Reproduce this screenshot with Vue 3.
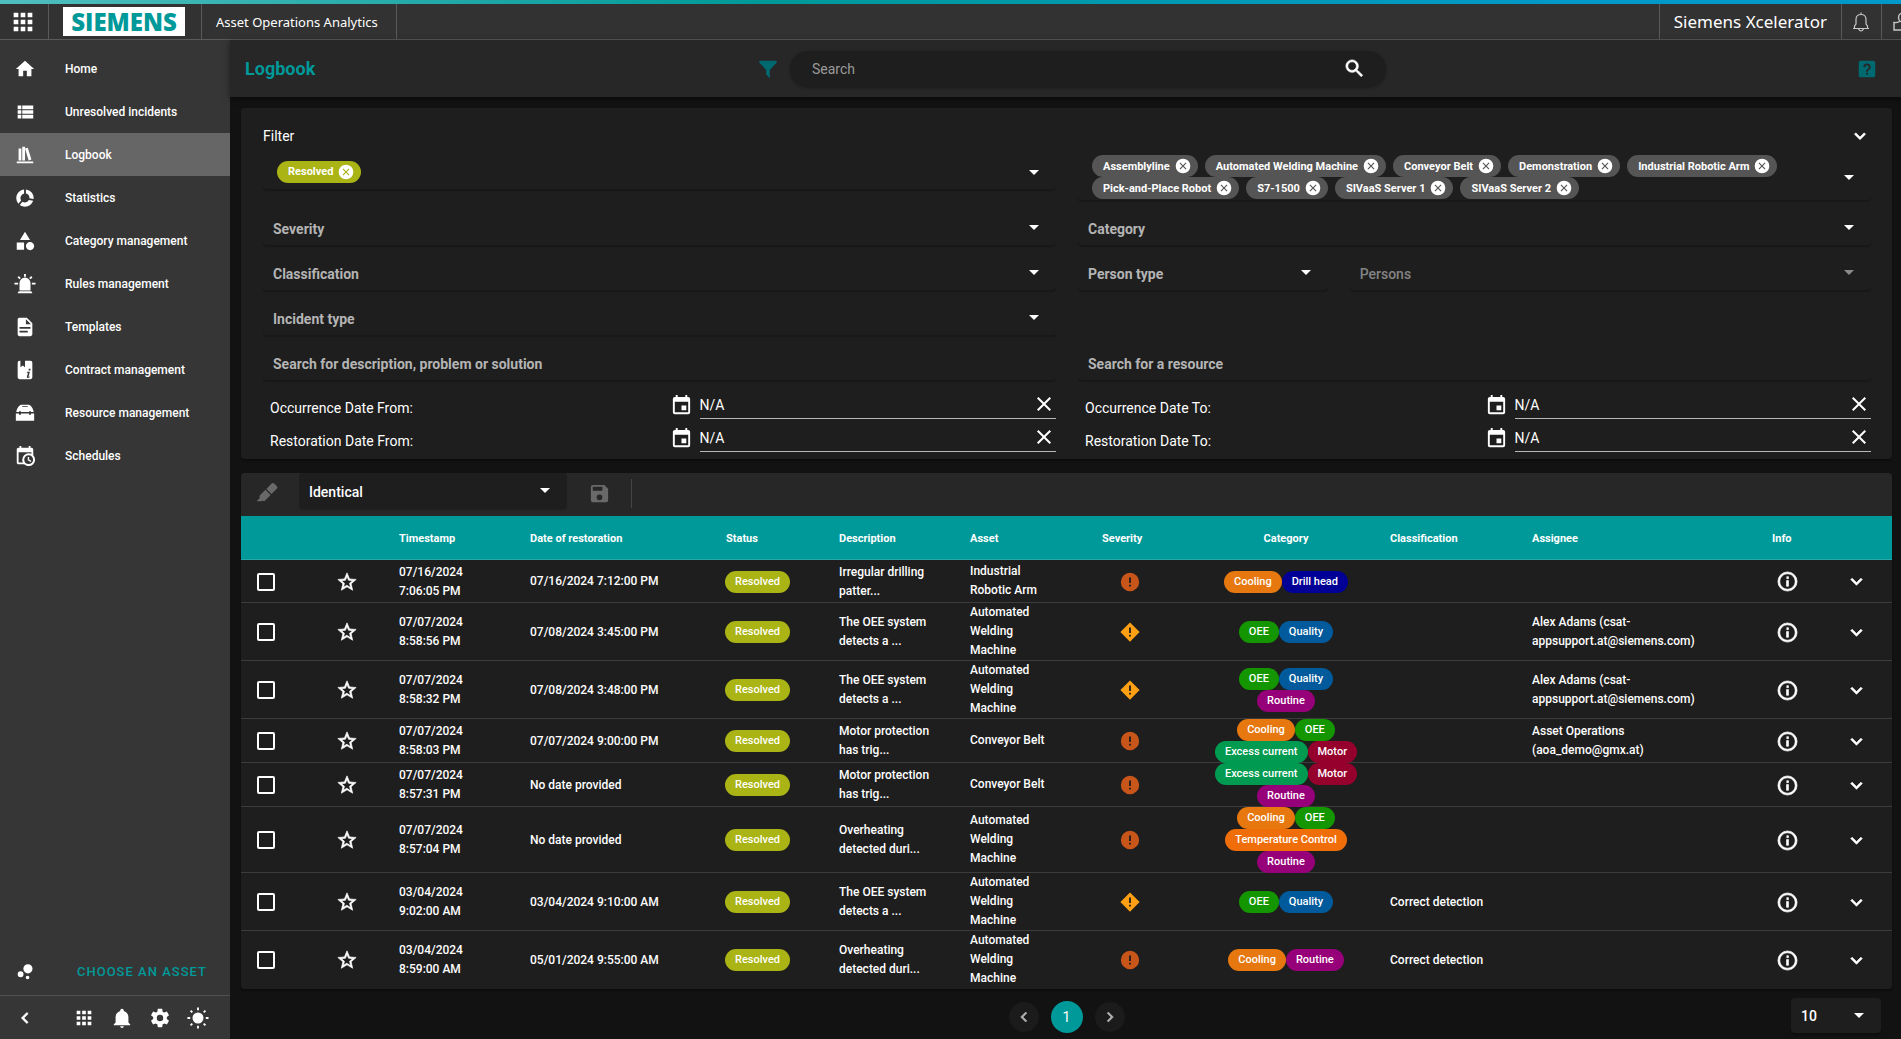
<script setup>
import { h } from 'vue'

const paths = {
  home: 'M10,20V14H14V20H19V12H22L12,3L2,12H5V20H10Z',
  list: 'M9,5V9H21V5M9,19H21V15H9M9,14H21V10H9M4,9H8V5H4M4,19H8V15H4M4,14H8V10H4V14Z',
  books: 'M9 3V18H12V3H9M12 5L16 18L19 17L15 4L12 5M5 5V18H8V5H5M3 19V21H21V19H3Z',
  donut: 'M13 2.6A9.5 9.5 0 0 1 21.4 13L16.8 12.4A4.9 4.9 0 0 0 13 7.2ZM20.9 15A9.5 9.5 0 0 1 6.3 19.6L9.2 16A4.9 4.9 0 0 0 16.2 14.3ZM4.8 18.2A9.5 9.5 0 0 1 11 2.6V7.2A4.9 4.9 0 0 0 7.8 14.6Z',
  shapes: 'M11,13.5V21.5H3V13.5H11M12,2L17.5,11H6.5L12,2M17.5,13C20,13 22,15 22,17.5C22,20 20,22 17.5,22C15,22 13,20 13,17.5C13,15 15,13 17.5,13Z',
  alarm: 'M6,6.9L3.87,4.78L5.28,3.37L7.4,5.5L6,6.9M13,1V4H11V1H13M20.13,4.78L18,6.9L16.6,5.5L18.72,3.37L20.13,4.78M4.5,10.5V12.5H.5V10.5H4.5M19.5,10.5H23.5V12.5H19.5V10.5M6,20H18A2,2 0 0,1 20,22H4A2,2 0 0,1 6,20M12,5A6,6 0 0,1 18,11V19H6V11A6,6 0 0,1 12,5Z',
  doc: 'M13,9H18.5L13,3.5V9M6,2H14L20,8V20A2,2 0 0,1 18,22H6C4.89,22 4,21.1 4,20V4C4,2.89 4.89,2 6,2M15,18V16H6V18H15M18,14V12H6V14H18Z',
  bookInfo: 'M4 4A2 2 0 0 1 6 2H7V9L9.5 7L12 9V2H18A2 2 0 0 1 20 4V20A2 2 0 0 1 18 22H6A2 2 0 0 1 4 20ZM16 10.5V12.5H18V10.5ZM14 14V15H15.3L14 19.5Q14 20.8 15.5 20.6L17.4 19.6L17 19L15.8 19.5L17.3 14Z',
  toolbox: 'M8 3H16C18.5 3.5 21 7 21.5 11H18.5V10H16.5V11H7.5V10H5.5V11H2.5C3 7 5.5 3.5 8 3ZM9 4.5V5.5H15V4.5ZM2 12.5H5.5V14H7.5V12.5H16.5V14H18.5V12.5H22V20.5H2Z',
  schedule: 'M15,13H16.5V15.82L18.94,17.23L18.19,18.53L15,16.69V13M19,8H5V19H9.67C9.24,18.09 9,17.07 9,16A7,7 0 0,1 16,9C17.07,9 18.09,9.24 19,9.67V8M5,21C3.89,21 3,20.1 3,19V5C3,3.89 3.89,3 5,3H6V1H8V3H16V1H18V3H19A2,2 0 0,1 21,5V11.1C22.24,12.36 23,14.09 23,16A7,7 0 0,1 16,23C14.09,23 12.36,22.24 11.1,21H5M16,11.15A4.85,4.85 0 0,0 11.15,16C11.15,18.68 13.32,20.85 16,20.85A4.85,4.85 0 0,0 20.85,16C20.85,13.32 18.68,11.15 16,11.15Z',
  bubbles: 'M7.2 11.2A3.2 3.2 0 1 0 7.2 17.6A3.2 3.2 0 1 0 7.2 11.2ZM14.8 16A2 2 0 1 0 14.8 20A2 2 0 1 0 14.8 16ZM15.2 3.5A5 5 0 1 0 15.2 13.5A5 5 0 1 0 15.2 3.5Z',
  left: 'M15.41,16.58L10.83,12L15.41,7.41L14,6L8,12L14,18L15.41,16.58Z',
  right: 'M8.59,16.58L13.17,12L8.59,7.41L10,6L16,12L10,18L8.59,16.58Z',
  down: 'M7.41,8.58L12,13.17L16.59,8.58L18,10L12,16L6,10L7.41,8.58Z',
  grid: 'M16,20H20V16H16M16,14H20V10H16M10,8H14V4H10M16,8H20V4H16M10,14H14V10H10M4,14H8V10H4M4,20H8V16H4M10,20H14V16H10M4,8H8V4H4V8Z',
  bell: 'M21,19V20H3V19L5,17V11C5,7.9 7.03,5.17 10,4.29C10,4.19 10,4.1 10,4A2,2 0 0,1 12,2A2,2 0 0,1 14,4C14,4.1 14,4.19 14,4.29C16.97,5.17 19,7.9 19,11V17L21,19M14,21A2,2 0 0,1 12,23A2,2 0 0,1 10,21',
  cog: 'M12,15.5A3.5,3.5 0 0,1 8.5,12A3.5,3.5 0 0,1 12,8.5A3.5,3.5 0 0,1 15.5,12A3.5,3.5 0 0,1 12,15.5M19.43,12.97C19.47,12.65 19.5,12.33 19.5,12C19.5,11.67 19.47,11.34 19.43,11L21.54,9.37C21.73,9.22 21.78,8.95 21.66,8.73L19.66,5.27C19.54,5.05 19.27,4.96 19.05,5.05L16.56,6.05C16.04,5.66 15.5,5.32 14.87,5.07L14.5,2.42C14.46,2.18 14.25,2 14,2H10C9.75,2 9.54,2.18 9.5,2.42L9.13,5.07C8.5,5.32 7.96,5.66 7.44,6.05L4.95,5.05C4.73,4.96 4.46,5.05 4.34,5.27L2.34,8.73C2.21,8.95 2.27,9.22 2.46,9.37L4.57,11C4.53,11.34 4.5,11.67 4.5,12C4.5,12.33 4.53,12.65 4.57,12.97L2.46,14.63C2.27,14.78 2.21,15.05 2.34,15.27L4.34,18.73C4.46,18.95 4.73,19.03 4.95,18.95L7.44,17.94C7.96,18.34 8.5,18.68 9.13,18.93L9.5,21.58C9.54,21.82 9.75,22 10,22H14C14.25,22 14.46,21.82 14.5,21.58L14.87,18.93C15.5,18.67 16.04,18.34 16.56,17.94L19.05,18.95C19.27,19.03 19.54,18.95 19.66,18.73L21.66,15.27C21.78,15.05 21.73,14.78 21.54,14.63L19.43,12.97Z',
  sun: 'M12 6A6 6 0 1 0 12 18A6 6 0 1 0 12 6ZM11 .5H13V3.5H11ZM11 20.5H13V23.5H11ZM.5 11H3.5V13H.5ZM20.5 11H23.5V13H20.5ZM3.2 4.6L4.6 3.2L6.5 5.1L5.1 6.5ZM17.5 18.9L18.9 17.5L20.8 19.4L19.4 20.8ZM17.5 5.1L19.4 3.2L20.8 4.6L18.9 6.5ZM3.2 19.4L5.1 17.5L6.5 18.9L4.6 20.8Z',
  filter: 'M2.5 3H21.5V5L14 13V22L10 18V13L2.5 5Z',
  search: 'M9.5,3A6.5,6.5 0 0,1 16,9.5C16,11.11 15.41,12.59 14.44,13.73L14.71,14H15.5L20.5,19L19,20.5L14,15.5V14.71L13.73,14.44C12.59,15.41 11.11,16 9.5,16A6.5,6.5 0 0,1 3,9.5A6.5,6.5 0 0,1 9.5,3M9.5,5C7,5 5,7 5,9.5C5,12 7,14 9.5,14C12,14 14,12 14,9.5C14,7 12,5 9.5,5Z',
  help: 'M11,18H13V16H11V18M12,6A4,4 0 0,0 8,10H10A2,2 0 0,1 12,8A2,2 0 0,1 14,10C14,12 11,11.75 11,15H13C13,12.75 16,12.5 16,10A4,4 0 0,0 12,6M5,3H19A2,2 0 0,1 21,5V19A2,2 0 0,1 19,21H5A2,2 0 0,1 3,19V5A2,2 0 0,1 5,3Z',
  caret: 'M7,10L12,15L17,10H7Z',
  close: 'M19,6.41L17.59,5L12,10.59L6.41,5L5,6.41L10.59,12L5,17.59L6.41,19L12,13.41L17.59,19L19,17.59L13.41,12L19,6.41Z',
  closeCircle: 'M12 1A11 11 0 1 1 12 23A11 11 0 1 1 12 1ZM16 6.8L12 10.8L8 6.8L6.8 8L10.8 12L6.8 16L8 17.2L12 13.2L16 17.2L17.2 16L13.2 12L17.2 8Z',
  calendar: 'M19,19H5V8H19M16,1V3H8V1H6V3H5C3.89,3 3,3.89 3,5V19A2,2 0 0,0 5,21H19A2,2 0 0,0 21,19V5C21,3.89 20.1,3 19,3H18V1M17,12H12V17H17V12Z',
  star: 'M12,15.39L8.24,17.66L9.23,13.38L5.91,10.5L10.29,10.13L12,6.09L13.71,10.13L18.09,10.5L14.77,13.38L15.76,17.66M22,9.24L14.81,8.63L12,2L9.19,8.63L2,9.24L7.45,13.97L5.82,21L12,17.27L18.18,21L16.54,13.97L22,9.24Z',
  alertCircle: 'M13,13H11V7H13M13,17H11V15H13M12,2A10,10 0 0,0 2,12A10,10 0 0,0 12,22A10,10 0 0,0 22,12A10,10 0 0,0 12,2Z',
  alertDiamond: 'M12 1.5L22.5 12L12 22.5L1.5 12ZM11 7V13H13V7ZM11 15V17H13V15Z',
  info: 'M11,9H13V7H11M12,20C7.59,20 4,16.41 4,12C4,7.59 7.59,4 12,4C16.41,4 20,7.59 20,12C20,16.41 16.41,20 12,20M12,2A10,10 0 0,0 2,12A10,10 0 0,0 12,22A10,10 0 0,0 22,12A10,10 0 0,0 12,2M11,17H13V11H11V17Z',
  marker: 'M18.5,1.15C17.97,1.15 17.46,1.34 17.07,1.73L11.26,7.55L16.91,13.2L22.73,7.39C23.5,6.61 23.5,5.35 22.73,4.56L19.89,1.73C19.5,1.34 19,1.15 18.5,1.15M10.3,8.5L4.34,14.46C3.56,15.24 3.56,16.5 4.36,17.31C3.14,18.54 1.9,19.77 .67,21H6.33L7.19,20.14C7.97,20.9 9.22,20.89 10,20.12L15.95,14.16Z',
  save: 'M15,9H5V5H15M12,19A3,3 0 0,1 9,16A3,3 0 0,1 12,13A3,3 0 0,1 15,16A3,3 0 0,1 12,19M17,3H5C3.89,3 3,3.9 3,5V19A2,2 0 0,0 5,21H19A2,2 0 0,0 21,19V7L17,3Z'
}

// thin outline glyphs that are drawn a little heavier
const heavy = ['down', 'left', 'right', 'star', 'info', 'search']

const Icon = (props) =>
  h('svg', { viewBox: '0 0 24 24', width: props.size || 24, height: props.size || 24, fill: 'currentColor', 'aria-hidden': 'true' }, [
    h('path', {
      d: paths[props.name],
      'fill-rule': 'evenodd',
      stroke: heavy.includes(props.name) ? 'currentColor' : 'none',
      'stroke-width': 0.7
    })
  ])
Icon.props = ['name', 'size']

const nav = [
  ['home', 'Home'],
  ['list', 'Unresolved incidents'],
  ['books', 'Logbook'],
  ['donut', 'Statistics'],
  ['shapes', 'Category management'],
  ['alarm', 'Rules management'],
  ['doc', 'Templates'],
  ['bookInfo', 'Contract management'],
  ['toolbox', 'Resource management'],
  ['schedule', 'Schedules']
]
const tools = [['grid', 'Apps'], ['bell', 'Notifications'], ['cog', 'Settings'], ['sun', 'Theme']]

const assets = [
  'Assemblyline', 'Automated Welding Machine', 'Conveyor Belt', 'Demonstration', 'Industrial Robotic Arm',
  'Pick-and-Place Robot', 'S7-1500', 'SIVaaS Server 1', 'SIVaaS Server 2'
]
const dates = ['Occurrence Date From:', 'Occurrence Date To:', 'Restoration Date From:', 'Restoration Date To:']

const colWidths = [79, 63, 131, 196, 113, 131, 132, 112, 176, 142, 240, 73, 63]

const drill = 'Irregular drilling patter...'
const oee = 'The OEE system detects a ...'
const motor = 'Motor protection has trig...'
const heat = 'Overheating detected duri...'
const welding = 'Automated Welding Machine'
const alex = 'Alex Adams (csat-appsupport.at@siemens.com)'

const rows = [
  { time: '07/16/2024 7:06:05 PM', restored: '07/16/2024 7:12:00 PM', text: drill, asset: 'Industrial Robotic Arm', high: true, tags: ['Cooling', 'Drill head'] },
  { time: '07/07/2024 8:58:56 PM', restored: '07/08/2024 3:45:00 PM', text: oee, asset: welding, tags: ['OEE', 'Quality'], who: alex },
  { time: '07/07/2024 8:58:32 PM', restored: '07/08/2024 3:48:00 PM', text: oee, asset: welding, tags: ['OEE', 'Quality', 'Routine'], who: alex },
  { time: '07/07/2024 8:58:03 PM', restored: '07/07/2024 9:00:00 PM', text: motor, asset: 'Conveyor Belt', high: true, tags: ['Cooling', 'OEE', 'Excess current', 'Motor'], who: 'Asset Operations (aoa_demo@gmx.at)' },
  { time: '07/07/2024 8:57:31 PM', restored: 'No date provided', text: motor, asset: 'Conveyor Belt', high: true, tags: ['Excess current', 'Motor', 'Routine'] },
  { time: '07/07/2024 8:57:04 PM', restored: 'No date provided', text: heat, asset: welding, high: true, tags: ['Cooling', 'OEE', 'Temperature Control', 'Routine'] },
  { time: '03/04/2024 9:02:00 AM', restored: '03/04/2024 9:10:00 AM', text: oee, asset: welding, tags: ['OEE', 'Quality'], cls: 'Correct detection' },
  { time: '03/04/2024 8:59:00 AM', restored: '05/01/2024 9:55:00 AM', text: heat, asset: welding, high: true, tags: ['Cooling', 'Routine'], cls: 'Correct detection' }
]
const slug = (t) => 'tag-' + t.toLowerCase().replace(' ', '-')
</script>

<template>
  <div class="app">
    <header class="topbar">
      <button class="cell apps" aria-label="Apps"><Icon name="grid" size="28" /></button>
      <div class="cell brand"><span class="logo">SIEMENS</span></div>
      <div class="cell product">Asset Operations Analytics</div>
      <div class="spacer"></div>
      <div class="cell xcelerator">Siemens Xcelerator</div>
      <button class="cell alerts" aria-label="Notifications">
        <svg width="20" height="22" viewBox="0 0 20 22" fill="none" stroke="#c8c8c8" stroke-width="1.2">
          <path d="M2 17.500H18M3.500 17V15L5 13V8.500C5 5.500 7 3.500 10 3.500S15 5.500 15 8.500V13L16.500 15V17M10 3.500V1.500M7.500 18Q10 22 12.500 18" />
        </svg>
      </button>
      <button class="cell user" aria-label="Account">
        <svg width="20" height="22" viewBox="0 0 20 22" fill="none" stroke="#c8c8c8" stroke-width="1.4">
          <path d="M10 2A4.500 4.500 0 1 0 10 11A4.500 4.500 0 1 0 10 2ZM6.500 10.500Q4 12 1 11.500V19H19V11.500Q16 12 13.500 10.500" />
        </svg>
      </button>
    </header>

    <div class="body">
      <aside class="sidebar">
        <nav class="nav">
          <a v-for="[icon, label] in nav" :key="label" href="#" class="nav-item" :class="{ active: label === 'Logbook' }">
            <Icon :name="icon" size="22" /><span>{{ label }}</span>
          </a>
        </nav>
        <div class="choose">
          <Icon name="bubbles" size="22" />
          <button class="choose-btn">CHOOSE AN ASSET</button>
        </div>
        <div class="tools">
          <button class="tool collapse" aria-label="Collapse"><Icon name="left" size="22" /></button>
          <button v-for="[icon, label] in tools" :key="label" class="tool" :aria-label="label"><Icon :name="icon" size="22" /></button>
        </div>
      </aside>

      <main class="main">
        <div class="pagebar">
          <h1>Logbook</h1>
          <div class="search-area">
            <button class="plain teal" aria-label="Filter"><Icon name="filter" size="22" /></button>
            <div class="searchbox">
              <input type="text" placeholder="Search" aria-label="Search" />
              <button class="plain" aria-label="Search"><Icon name="search" size="23" /></button>
            </div>
          </div>
          <button class="plain teal help" aria-label="Help"><Icon name="help" size="22" /></button>
        </div>

        <div class="content">
          <section class="card filter">
            <div class="filter-head">
              <h2>Filter</h2>
              <button class="plain" aria-label="Collapse filter"><Icon name="down" size="22" /></button>
            </div>
            <div class="filter-grid">
              <div class="field chips">
                <div class="chip-list">
                  <span class="chip green">Resolved<button class="plain" aria-label="Remove"><Icon name="closeCircle" size="16" /></button></span>
                </div>
                <button class="plain" aria-label="Open"><Icon name="caret" /></button>
              </div>
              <div class="field chips">
                <div class="chip-list">
                  <span v-for="a in assets" :key="a" class="chip">{{ a }}<button class="plain" aria-label="Remove"><Icon name="closeCircle" size="16" /></button></span>
                </div>
                <button class="plain" aria-label="Open"><Icon name="caret" /></button>
              </div>
              <div class="field"><select aria-label="Severity"><option>Severity</option></select><Icon name="caret" class="caret" /></div>
              <div class="field"><select aria-label="Category"><option>Category</option></select><Icon name="caret" class="caret" /></div>
              <div class="field"><select aria-label="Classification"><option>Classification</option></select><Icon name="caret" class="caret" /></div>
              <div class="persons">
                <div class="field ptype"><select aria-label="Person type"><option>Person type</option></select><Icon name="caret" class="caret" /></div>
                <div class="field pers off"><select aria-label="Persons" disabled><option>Persons</option></select><Icon name="caret" class="caret" /></div>
              </div>
              <div class="field left-only"><select aria-label="Incident type"><option>Incident type</option></select><Icon name="caret" class="caret" /></div>
              <div class="field"><input type="text" placeholder="Search for description, problem or solution" aria-label="Search for description, problem or solution" /></div>
              <div class="field"><input type="text" placeholder="Search for a resource" aria-label="Search for a resource" /></div>
            </div>
            <div class="date-grid">
              <div v-for="(d, i) in dates" :key="d" class="date">
                <label :for="'date' + i">{{ d }}</label>
                <div class="date-value">
                  <Icon name="calendar" size="23" />
                  <div class="date-input">
                    <input :id="'date' + i" type="text" value="N/A" />
                    <button class="plain" aria-label="Clear"><Icon name="close" /></button>
                  </div>
                </div>
              </div>
            </div>
          </section>

          <section class="card log">
            <div class="log-bar">
              <button class="plain" aria-label="Highlight" disabled><Icon name="marker" size="22" /></button>
              <div class="field match"><select aria-label="Match"><option>Identical</option></select><Icon name="caret" class="caret" /></div>
              <button class="plain" aria-label="Save" disabled><Icon name="save" size="23" /></button>
              <span class="bar-line"></span>
            </div>
            <table>
              <colgroup><col v-for="(w, i) in colWidths" :key="i" :style="{ width: w + 'px' }" /></colgroup>
              <thead>
                <tr>
                  <th></th><th></th><th>Timestamp</th><th>Date of restoration</th><th>Status</th><th>Description</th><th>Asset</th>
                  <th>Severity</th><th class="mid">Category</th><th>Classification</th><th>Assignee</th><th>Info</th><th></th>
                </tr>
              </thead>
              <tbody>
                <tr v-for="(r, i) in rows" :key="i">
                  <td><input type="checkbox" class="check" aria-label="Select row" /></td>
                  <td><button class="plain" aria-label="Favourite"><Icon name="star" size="22" /></button></td>
                  <td>{{ r.time }}</td>
                  <td>{{ r.restored }}</td>
                  <td class="state"><span class="tag status">Resolved</span></td>
                  <td>{{ r.text }}</td>
                  <td class="asset">{{ r.asset }}</td>
                  <td class="sev"><Icon :name="r.high ? 'alertCircle' : 'alertDiamond'" size="22" :class="r.high ? 'high' : 'warn'" /></td>
                  <td class="cats"><div class="tags"><span v-for="t in r.tags" :key="t" class="tag" :class="slug(t)">{{ t }}</span></div></td>
                  <td>{{ r.cls }}</td>
                  <td class="who">{{ r.who }}</td>
                  <td class="info"><button class="plain" aria-label="Info"><Icon name="info" size="23" /></button></td>
                  <td><button class="plain" aria-label="Expand"><Icon name="down" size="23" /></button></td>
                </tr>
              </tbody>
            </table>
          </section>

          <div class="pager">
            <nav class="pages" aria-label="Pages">
              <button class="page arrow" aria-label="Previous"><Icon name="left" size="20" /></button>
              <button class="page current">1</button>
              <button class="page arrow" aria-label="Next"><Icon name="right" size="20" /></button>
            </nav>
            <div class="field size"><select aria-label="Rows per page"><option>10</option></select><Icon name="caret" class="caret" /></div>
          </div>
        </div>
      </main>
    </div>
  </div>
</template>

<style>
body {
  background: #121212;
}
</style>

<style scoped>
* {
  box-sizing: border-box;
}
.app {
  min-height: 100vh;
  display: flex;
  flex-direction: column;
  background: #121212;
  color: #fff;
  font-family: Roboto, "Liberation Sans", sans-serif;
  font-size: 14px;
}
svg {
  display: block;
  flex: none;
}
button {
  font: inherit;
  color: inherit;
  background: none;
  border: 0;
  padding: 0;
}
.plain {
  display: block;
  flex: none;
}
.teal {
  color: #006a70;
}

/* top bar */
.topbar {
  display: flex;
  height: 40px;
  padding-top: 4px;
  background: linear-gradient(90deg, #50bebe 0, #009999 40%, #0099cc 85%) 0 0 / 100% 4px no-repeat, #323232;
  border-bottom: 1px solid #5a5a5a;
  overflow: hidden;
}
.cell {
  display: flex;
  align-items: center;
  justify-content: center;
  flex: none;
  border-right: 1px solid #5a5a5a;
  white-space: nowrap;
}
.apps {
  width: 49px;
  padding-right: 2px;
}
.brand {
  width: 153px;
  padding: 0 16px 0 14px;
}
.logo {
  width: 122px;
  height: 29px;
  background: #fff;
  color: #009999;
  font: 800 24px/29px "Open Sans", "Noto Sans", sans-serif;
  text-align: center;
}
.product {
  padding: 0 18px 0 14px;
  font: 400 13px/20px "Noto Sans", "Open Sans", sans-serif;
}
.spacer {
  flex: 1;
}
.xcelerator {
  border-left: 1px solid #5a5a5a;
  padding: 0 14px;
  font: 400 17px/24px "Noto Sans", "Open Sans", sans-serif;
}
.alerts {
  width: 40px;
  padding-right: 2px;
}
.user {
  width: 19px;
  padding-left: 11px;
  justify-content: flex-start;
  overflow: hidden;
  border-right: 0;
}

.body {
  flex: 1;
  display: flex;
}

/* side navigation */
.sidebar {
  width: 230px;
  flex: none;
  display: flex;
  flex-direction: column;
  background: #363636;
}
.nav {
  flex: 1;
  padding-top: 7px;
}
.nav-item {
  display: flex;
  align-items: center;
  gap: 29px;
  height: 43px;
  padding-left: 14px;
  color: #fff;
  text-decoration: none;
  font-size: 12px;
  font-weight: 500;
}
.nav-item.active {
  background: #666;
}
.choose {
  display: flex;
  align-items: center;
  gap: 41px;
  height: 47px;
  padding-left: 14px;
}
.choose-btn {
  color: #009999;
  font-size: 13px;
  font-weight: 500;
  letter-spacing: 1px;
}
.tools {
  display: flex;
  align-items: center;
  gap: 16px;
  height: 44px;
  padding-left: 14px;
  border-top: 1px solid #505050;
}
.collapse {
  margin-right: 21px;
}

/* page bar */
.main {
  flex: 1;
  min-width: 0;
}
.pagebar {
  display: grid;
  grid-template-columns: 1fr auto 1fr;
  align-items: center;
  height: 57px;
  padding: 0 23px 0 15px;
  background: #272727;
  box-shadow: 0 2px 6px rgba(0, 0, 0, 0.5);
}
h1 {
  margin: 0;
  color: #009999;
  font-size: 18px;
  font-weight: 700;
}
.search-area {
  display: flex;
  align-items: center;
  gap: 11px;
  padding-left: 20px;
}
.searchbox {
  display: flex;
  align-items: center;
  width: 596px;
  height: 36px;
  padding: 0 20px 0 22px;
  border-radius: 18px;
  background: #1e1e1e;
  box-shadow: 0 1px 3px rgba(0, 0, 0, 0.3);
}
input,
select {
  flex: 1;
  min-width: 0;
  width: 100%;
  height: 100%;
  border: 0;
  outline: 0;
  padding: 0;
  margin: 0;
  background: none;
  color: #fff;
  font: inherit;
  appearance: none;
  opacity: 1;
}
.searchbox input::placeholder {
  color: #9a9a9a;
}
.help {
  justify-self: end;
}

/* cards and fields */
.content {
  padding: 11px 9px 0 11px;
}
.card {
  border-radius: 4px;
  background: #1e1e1e;
  box-shadow: 0 2px 2px rgba(0, 0, 0, 0.3);
}
.filter {
  padding: 16px 21px 7px 22px;
}
.filter-head {
  display: flex;
  align-items: center;
  justify-content: space-between;
  height: 24px;
}
h2 {
  margin: 0;
  font-size: 14px;
  font-weight: 400;
}
.filter-grid {
  display: grid;
  grid-template-columns: 1fr 1fr;
  gap: 10px 22px;
  padding-top: 6px;
  align-items: start;
}
.field {
  position: relative;
  height: 35px;
  border-radius: 4px;
  background: #1e1e1e;
  box-shadow: 0 2px 1px rgba(0, 0, 0, 0.2);
  font-weight: 700;
}
.field select,
.field > input {
  display: block;
  padding: 2px 40px 0 10px;
  color: #b4b4b4;
}
.field > input::placeholder {
  color: #b4b4b4;
}
.caret {
  position: absolute;
  right: 10px;
  top: 5px;
  pointer-events: none;
}
.off {
  color: #8a8a8a;
}
.off select {
  color: #848484;
  font-weight: 500;
}
.chips {
  display: flex;
  align-items: center;
  height: auto;
  min-height: 35px;
  padding: 1px 10px 1px 14px;
}
.chip-list {
  flex: 1;
  display: flex;
  flex-wrap: wrap;
  gap: 0 7px;
  padding-right: 30px;
}
.chip {
  display: flex;
  align-items: center;
  gap: 5px;
  height: 22px;
  padding: 0 7px 0 11px;
  border-radius: 11px;
  background: #555;
  font-size: 11px;
  font-weight: 700;
}
.chip.green,
.status {
  background: #aab414;
}
.persons {
  display: grid;
  grid-template-columns: repeat(12, 1fr);
  gap: 22px;
}
.ptype {
  grid-column: span 4;
}
.pers {
  grid-column: span 8;
}
.left-only {
  grid-column: 1;
}
.left-only + .field {
  grid-column: 1;
}
.date-grid {
  display: grid;
  grid-template-columns: 1fr 1fr;
  gap: 0 22px;
  padding-top: 6px;
}
.date {
  display: grid;
  grid-template-columns: 1fr 1fr;
  align-items: end;
  height: 33px;
}
.date label {
  padding-left: 7px;
  line-height: 22px;
}
.date-value {
  display: flex;
  align-items: center;
  gap: 7px;
  padding-left: 10px;
}
.date-input {
  flex: 1;
  display: flex;
  align-items: flex-start;
  height: 27px;
  border-bottom: 1px solid #b8b8b8;
}

/* log table */
.log {
  margin-top: 14px;
  overflow: hidden;
}
.log-bar {
  display: flex;
  align-items: center;
  height: 43px;
  padding: 0 0 3px 15px;
  background: #272727;
  color: #696969;
}
.match {
  width: 268px;
  margin: 0 21px;
  color: #fff;
  align-self: flex-start;
}
.field.match select,
.field.size select {
  color: #fff;
  font-weight: 500;
}
.bar-line {
  width: 1px;
  height: 29px;
  margin-left: 20px;
  background: #454545;
}
table {
  width: 100%;
  table-layout: fixed;
  border-collapse: collapse;
}
th {
  height: 44px;
  padding: 0 0 0 16px;
  background: #009999;
  box-shadow: inset 0 -1px #26a8a8;
  font-size: 11px;
  font-weight: 700;
  text-align: left;
}
th.mid {
  padding: 0;
  text-align: center;
}
td {
  height: 43px;
  padding: 0 16px;
  font-size: 12px;
  font-weight: 500;
  line-height: 19px;
}
tbody tr {
  box-shadow: inset 0 -1px #3c3c3c;
}
tbody tr:last-child {
  box-shadow: none;
}
td.state {
  padding: 0 0 0 15px;
}
td.asset {
  padding: 0 28px 1px 16px;
}
td.sev {
  padding: 0 0 0 33px;
}
td.cats {
  padding: 0 14px;
}
td.who {
  padding-right: 32px;
}
td.info {
  padding: 0 0 0 20px;
}
.check {
  display: block;
  width: 18px;
  height: 18px;
  border: 2px solid #fff;
  border-radius: 2px;
}
.high {
  color: #c85519;
}
.warn {
  color: #ffa014;
}
.tags {
  display: flex;
  flex-wrap: wrap;
  justify-content: center;
}
.tag {
  display: block;
  width: max-content;
  height: 22px;
  padding: 0 10px;
  border-radius: 11px;
  font-size: 11px;
  line-height: 21px;
}
.tag-cooling {
  background: #e6780f;
}
.tag-drill-head {
  background: #000096;
}
.tag-oee {
  background: #149600;
}
.tag-quality {
  background: #005a9b;
}
.tag-routine {
  background: #960078;
}
.tag-excess-current {
  background: #009b50;
}
.tag-motor {
  background: #96002d;
}
.tag-temperature-control {
  background: #f06e0a;
}

/* pager */
.pager {
  display: grid;
  grid-template-columns: 1fr auto 1fr;
  align-items: center;
  padding: 8px 11px 0;
}
.pages {
  grid-column: 2;
  display: flex;
  align-items: center;
  gap: 12px;
  padding-top: 4px;
}
.page {
  display: flex;
  align-items: center;
  justify-content: center;
  width: 30px;
  height: 30px;
  border-radius: 50%;
  background: #1b1b1b;
  color: #b0b0b0;
}
.page.current {
  width: 32px;
  height: 32px;
  background: #009999;
  color: #fff;
}
.size {
  justify-self: end;
  width: 90px;
}
</style>
